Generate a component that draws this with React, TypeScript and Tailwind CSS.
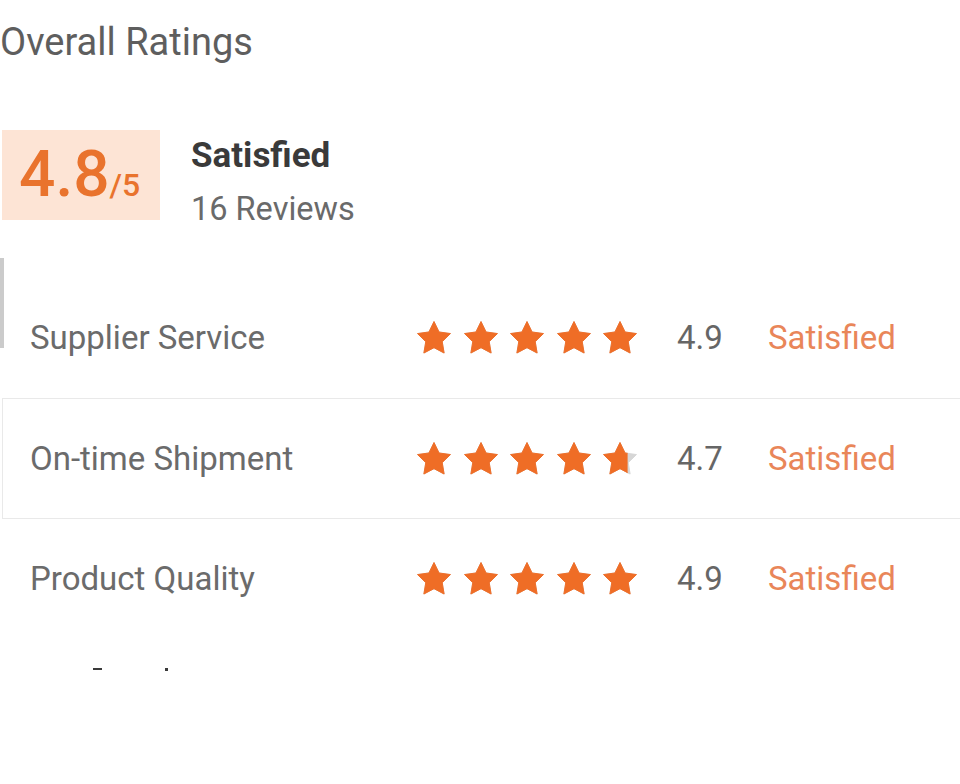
import React from "react";

type Row = {
  label: string;
  score: number;
  status: string;
};

const rows: Row[] = [
  { label: "Supplier Service", score: 4.9, status: "Satisfied" },
  { label: "On-time Shipment", score: 4.7, status: "Satisfied" },
  { label: "Product Quality", score: 4.9, status: "Satisfied" },
];

const STAR =
  "M12 1.6l3.2 6.6 7.2 1-5.2 5.1 1.2 7.2L12 18.1l-6.4 3.4 1.2-7.2L1.6 9.2l7.2-1z";

const Star = ({ fill }: { fill: number }) => {
  const id = React.useId();
  return (
    <svg viewBox="0 0 24 24" className="h-[38px] w-[38px]">
      <defs>
        <clipPath id={id}>
          <rect x="0" y="0" width={24 * fill} height="24" />
        </clipPath>
      </defs>
      <path d={STAR} fill="#d6d6d6" stroke="#d6d6d6" strokeWidth="0.6" strokeLinejoin="round" />
      <path
        d={STAR}
        fill="#ef6d26"
        stroke="#ef6d26"
        strokeWidth="0.6"
        strokeLinejoin="round"
        clipPath={`url(#${id})`}
      />
    </svg>
  );
};

const Stars = ({ score }: { score: number }) => {
  // 4.9 shows as full, 4.7 shows most of the last star
  const last = score >= 4.8 ? 1 : 0.7;
  return (
    <div className="flex items-center gap-[8.5px]">
      {[1, 1, 1, 1, last].map((f, i) => (
        <Star key={i} fill={f} />
      ))}
    </div>
  );
};

export default function App() {
  return (
    <div className="h-[784px] w-[960px] overflow-hidden bg-white font-['Roboto',sans-serif]">
      <div className="pt-[20px] text-[38px] leading-[44px] text-[#5e5e5e]">
        Overall Ratings
      </div>

      <div className="mt-[66px] flex items-start">
        <div className="ml-[2px] flex h-[90px] w-[158px] items-center bg-[#fde4d5] pl-[17px]">
          <div className="flex items-baseline font-medium text-[#e9732d]">
            <span className="text-[64px] leading-none">4.8</span>
            <span className="text-[32px] leading-none">/5</span>
          </div>
        </div>
        <div className="ml-[31px] flex flex-col gap-[13px] pt-[6px]">
          <span className="text-[35px] font-bold leading-[40px] text-[#3a3a3a]">
            Satisfied
          </span>
          <span className="text-[32.5px] leading-[40px] text-[#6a6a6a]">
            16 Reviews
          </span>
        </div>
      </div>

      <div className="relative mt-[29px] pt-[20px]">
        <div className="absolute left-0 top-0 h-[90px] w-[4px] bg-[#cbcbcb]" />
        {rows.map((row, i) => (
          <div
            key={row.label}
            className={
              i === 1
                ? "ml-[2px] flex h-[121px] items-center border-y border-l border-[#e9e9e9] pl-[27px]"
                : "flex h-[120px] items-center pl-[30px]"
            }
          >
            <span className="w-[385px] text-[33px] text-[#6b6b6b]">
              {row.label}
            </span>
            <Stars score={row.score} />
            <span className="ml-[38px] w-[91px] text-[33px] text-[#666666]">
              {row.score.toFixed(1)}
            </span>
            <span className="text-[33px] text-[#e98659]">{row.status}</span>
          </div>
        ))}
      </div>

      <div className="mt-[29px] flex items-start">
        <div className="ml-[93px] h-[2px] w-[9px] bg-[#3a3a3a]" />
        <div className="ml-[63px] h-[3px] w-[3px] bg-[#3a3a3a]" />
      </div>
    </div>
  );
}
